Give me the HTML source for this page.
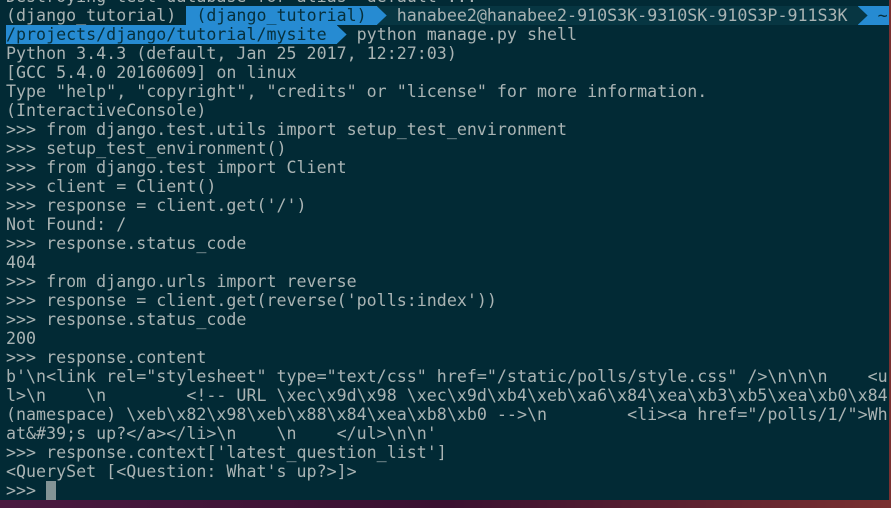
<!DOCTYPE html>
<html><head><meta charset="utf-8"><style>
html,body{margin:0;padding:0;width:891px;height:508px;overflow:hidden;background:linear-gradient(90deg,#4a1a40,#3a1030 50%,#7a3030);}
#t{position:absolute;left:0;top:0;width:889px;height:500px;background:#022a35;overflow:hidden;}
pre{margin:0;position:absolute;left:6px;top:-13px;font-family:"DejaVu Sans Mono","Liberation Mono",monospace;font-size:16.65px;line-height:19px;color:#a9b3b3;white-space:pre;}
.b{background:#268bd2;color:#06303c;}
.d{background:#073642;}
.a{display:inline-block;width:1ch;height:19px;vertical-align:top;}
.a i{display:block;width:100%;height:100%;clip-path:polygon(0 0,100% 50%,0 100%);}
.c{display:inline-block;width:1ch;height:19px;background:#839496;vertical-align:top;}
</style></head><body><div id="t"><pre>Destroying test database for alias 'default'...
(django_tutorial) <span class="b"> (django_tutorial) </span><span class="a d"><i style="background:#268bd2"></i></span><span class="d"> hanabee2@hanabee2-910S3K-9310SK-910S3P-911S3K </span><span class="a b"><i style="background:#073642"></i></span><span class="b"> ~ </span>
<span class="b">/projects/django/tutorial/mysite </span><span class="a"><i style="background:#268bd2"></i></span> python manage.py shell
Python 3.4.3 (default, Jan 25 2017, 12:27:03)
[GCC 5.4.0 20160609] on linux
Type "help", "copyright", "credits" or "license" for more information.
(InteractiveConsole)
&gt;&gt;&gt; from django.test.utils import setup_test_environment
&gt;&gt;&gt; setup_test_environment()
&gt;&gt;&gt; from django.test import Client
&gt;&gt;&gt; client = Client()
&gt;&gt;&gt; response = client.get('/')
Not Found: /
&gt;&gt;&gt; response.status_code
404
&gt;&gt;&gt; from django.urls import reverse
&gt;&gt;&gt; response = client.get(reverse('polls:index'))
&gt;&gt;&gt; response.status_code
200
&gt;&gt;&gt; response.content
b'\n&lt;link rel="stylesheet" type="text/css" href="/static/polls/style.css" /&gt;\n\n\n    &lt;u
l&gt;\n    \n        &lt;!-- URL \xec\x9d\x98 \xec\x9d\xb4\xeb\xa6\x84\xea\xb3\xb5\xea\xb0\x84
(namespace) \xeb\x82\x98\xeb\x88\x84\xea\xb8\xb0 --&gt;\n        &lt;li&gt;&lt;a href="/polls/1/"&gt;Wh
at&amp;#39;s up?&lt;/a&gt;&lt;/li&gt;\n    \n    &lt;/ul&gt;\n\n'
&gt;&gt;&gt; response.context['latest_question_list']
&lt;QuerySet [&lt;Question: What's up?&gt;]&gt;
&gt;&gt;&gt; <span class="c"></span></pre></div></body></html>
